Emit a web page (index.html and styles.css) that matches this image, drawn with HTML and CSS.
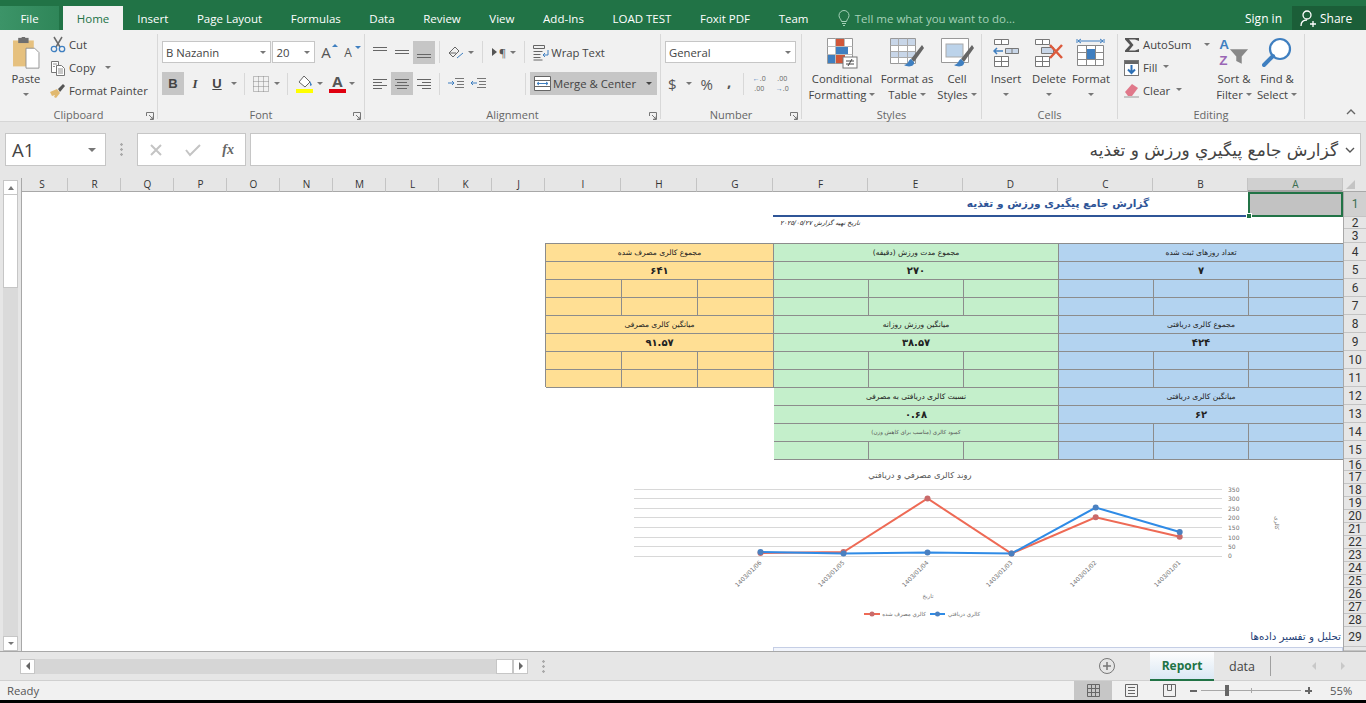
FILE: index.html
```html
<!DOCTYPE html>
<html lang="en">
<head>
    <meta charset="UTF-8">
    <title>Report - Excel</title>
    <link rel="stylesheet" href="styles.css">
</head>
<body>
    <div class="title-bar">
        <div class="tab file">File</div>
        <div class="tab home">Home</div>
        <div class="tab">Insert</div>
        <div class="tab">Page Layout</div>
        <div class="tab">Formulas</div>
        <div class="tab">Data</div>
        <div class="tab">Review</div>
        <div class="tab">View</div>
        <div class="tab">Add-Ins</div>
        <div class="tab">LOAD TEST</div>
        <div class="tab">Foxit PDF</div>
        <div class="tab">Team</div>
        <div class="tell-me">
            <svg width="12" height="17" viewBox="0 0 12 17" fill="none" stroke="#a5d1b8"><path d="M3.5 11.5C3 9 1 8 1 5.5a5 5 0 0 1 10 0C11 8 9 9 8.5 11.5zM4 13.5h4M5 15.5h2"/></svg>
            <span>Tell me what you want to do...</span>
        </div>
        <div class="sign-in">Sign in</div>
        <div class="share">
            <svg width="17" height="17" viewBox="0 0 17 17" fill="none" stroke="#fff" stroke-width="1.3"><circle cx="7" cy="5" r="4"/><path d="M1 16c0-4 2-6 6-6M10 14h6M13 11v6"/></svg>
            <span>Share</span>
        </div>
    </div>

    <div class="ribbon">
        <!-- Clipboard -->
        <div class="group clipboard">
            <div class="group-body">
                <div class="big-tool paste">
                    <svg width="32" height="37" viewBox="0 0 32 37"><rect x="1" y="4" width="24" height="30" fill="#e6c17f"/><rect x="7" y="1" width="12" height="6" fill="#6f6f6f"/><rect x="11" y="0" width="4" height="3" fill="#6f6f6f"/><path d="M16 13h10l5 5v18H16z" fill="#fff" stroke="#8a8a8a"/></svg>
                    <span>Paste</span>
                    <i class="caret"></i>
                </div>
                <div class="small-col">
                    <div class="small-tool">
                        <svg width="16" height="17" viewBox="0 0 16 17" fill="none"><path d="M4 1l6 10M12 1L6 11" stroke="#6a6a6a" stroke-width="1.5"/><circle cx="4" cy="13" r="2.7" stroke="#3f7fc0" stroke-width="1.3"/><circle cx="12" cy="13" r="2.7" stroke="#3f7fc0" stroke-width="1.3"/></svg>
                        <span>Cut</span>
                    </div>
                    <div class="small-tool">
                        <svg width="16" height="16" viewBox="0 0 16 16" fill="#fff" stroke="#777"><path d="M1.5 1.5h7v11h-7z"/><path d="M6.5 5.5h5l3 3v7h-8z"/><path d="M3 4h4M3 6.500h2M8 9h5M8 11h5M8 13h5" stroke-width=".8"/></svg>
                        <span>Copy</span>
                        <i class="caret gap"></i>
                    </div>
                    <div class="small-tool">
                        <svg width="16" height="15" viewBox="0 0 16 15"><path d="M0 9l7-3 3 4-4 5-2-1 1-2-3 1z" fill="#e1b96f"/><path d="M8 6l5-5 2 2-5 6z" fill="#555"/></svg>
                        <span>Format Painter</span>
                    </div>
                </div>
            </div>
            <div class="group-label">Clipboard</div>
            <svg class="launcher" width="8" height="8" viewBox="0 0 8 8" fill="none" stroke="#777"><path d="M.5 4V.5H7.500V7.500H4M3 3l4 4M4.500 7H7V4.500"/></svg>
        </div>

        <!-- Font -->
        <div class="group font">
            <div class="group-body rows">
                <div class="tool-row first">
                    <div class="combo font-name"><span>B Nazanin</span><i class="caret"></i></div>
                    <div class="combo font-size"><span>20</span><i class="caret"></i></div>
                    <div class="size-btn grow">A<i class="up"></i></div>
                    <div class="size-btn shrink">A<i class="down"></i></div>
                </div>
                <div class="tool-row second">
                    <div class="btn active bold">B</div>
                    <div class="btn italic">I</div>
                    <div class="btn underline">U</div>
                    <i class="caret narrow"></i>
                    <div class="sep"></div>
                    <svg class="borders" width="16" height="16" viewBox="0 0 16 16" fill="none" stroke="#8a8a8a" stroke-dasharray="1 1"><path d="M.5.5h15v15H.5zM.5 5.500h15M.5 10.500h15M5.500.5v15M10.500.5v15"/></svg>
                    <i class="caret narrow"></i>
                    <div class="sep"></div>
                    <svg class="fill-color" width="18" height="20" viewBox="0 0 18 20"><path d="M3 8l5-6 6 6-5 5z" fill="#fff" stroke="#666"/><path d="M14 7l2 4-2 1z" fill="#3f7fc0"/><rect x="0" y="15" width="17" height="4" fill="#ffff00"/></svg>
                    <i class="caret narrow"></i>
                    <div class="font-color">A<b></b></div>
                    <i class="caret narrow"></i>
                </div>
            </div>
            <div class="group-label">Font</div>
            <svg class="launcher" width="8" height="8" viewBox="0 0 8 8" fill="none" stroke="#777"><path d="M.5 4V.5H7.500V7.500H4M3 3l4 4M4.500 7H7V4.500"/></svg>
        </div>

        <!-- Alignment -->
        <div class="group alignment">
            <div class="group-body rows">
                <div class="tool-row first">
                    <div class="align-btn"><svg width="14" height="10" viewBox="0 0 14 10" stroke="#666"><path d="M0 .5h14M0 3.500h14"/></svg></div>
                    <div class="align-btn"><svg width="14" height="10" viewBox="0 0 14 10" stroke="#666"><path d="M0 3.500h14M0 6.500h14"/></svg></div>
                    <div class="align-btn active"><svg width="14" height="14" viewBox="0 0 14 14" stroke="#666"><path d="M0 9.500h14M0 12.500h14"/></svg></div>
                    <div class="sep"></div>
                    <svg width="16" height="15" viewBox="0 0 16 15" fill="none" stroke="#666"><path d="M1 8l6-6 4 4-6 6zM1 8l7 0"/><path d="M9 13l6-5" stroke="#3f7fc0"/></svg>
                    <i class="caret narrow"></i>
                    <div class="sep"></div>
                    <span class="para"><svg width="8" height="10" viewBox="0 0 8 10"><path d="M1 1l5 4-5 4z" fill="#555"/></svg>¶</span>
                    <i class="caret narrow"></i>
                    <div class="sep"></div>
                    <div class="wrap-text">
                        <svg width="17" height="17" viewBox="0 0 17 17" fill="none" stroke="#666"><path d="M.5 1.500h11v3H.5zM.5 7.500h9M.5 10.500h7M.5 13.500h7M.5 16h9"/><path d="M15 6v5h-5M12 9l-2 2 2 2" stroke="#3f7fc0"/></svg>
                        <span>Wrap Text</span>
                    </div>
                </div>
                <div class="tool-row second">
                    <div class="align-btn"><svg width="14" height="12" viewBox="0 0 14 12" stroke="#666"><path d="M0 1.500h14M0 4.500h9M0 7.500h14M0 10.500h9"/></svg></div>
                    <div class="align-btn active"><svg width="14" height="12" viewBox="0 0 14 12" stroke="#666"><path d="M0 1.500h14M2 4.500h10M0 7.500h14M2 10.500h10"/></svg></div>
                    <div class="align-btn"><svg width="14" height="12" viewBox="0 0 14 12" stroke="#666"><path d="M0 1.500h14M5 4.500h9M0 7.500h14M5 10.500h9"/></svg></div>
                    <div class="sep"></div>
                    <svg class="indent" width="16" height="12" viewBox="0 0 16 12" fill="none" stroke="#777"><path d="M7 .5h9M9 3.500h7M9 6.500h7M7 9.500h9"/><path d="M0 5h6M4 3l2 2-2 2" stroke="#3f7fc0"/></svg>
                    <svg class="indent" width="16" height="12" viewBox="0 0 16 12" fill="none" stroke="#777"><path d="M7 .5h9M9 3.500h7M9 6.500h7M7 9.500h9"/><path d="M1 5h6M3 3L1 5l2 2" stroke="#3f7fc0"/></svg>
                    <div class="sep"></div>
                    <div class="merge">
                        <svg width="17" height="15" viewBox="0 0 17 15" fill="#fff" stroke="#666"><path d="M.5.5h16v14H.5zM.5 4.500h16M.5 10.500h16"/><path d="M3 7.500h11M5 6L3 7.500 5 9M12 6l2 1.500L12 9" fill="none" stroke="#3f7fc0"/></svg>
                        <span>Merge &amp; Center</span>
                        <i class="caret dark"></i>
                    </div>
                </div>
            </div>
            <div class="group-label">Alignment</div>
            <svg class="launcher" width="8" height="8" viewBox="0 0 8 8" fill="none" stroke="#777"><path d="M.5 4V.5H7.500V7.500H4M3 3l4 4M4.500 7H7V4.500"/></svg>
        </div>

        <!-- Number -->
        <div class="group number">
            <div class="group-body rows">
                <div class="tool-row first">
                    <div class="combo number-format"><span>General</span><i class="caret"></i></div>
                </div>
                <div class="tool-row second">
                    <span class="num-sym dollar">$</span>
                    <i class="caret narrow"></i>
                    <span class="num-sym percent">%</span>
                    <span class="num-sym comma">,</span>
                    <div class="sep"></div>
                    <div class="decimals"><span><em>←</em>.0</span><span>.00</span></div>
                    <div class="decimals"><span>.00</span><span><em>→</em>.0</span></div>
                </div>
            </div>
            <div class="group-label">Number</div>
            <svg class="launcher" width="8" height="8" viewBox="0 0 8 8" fill="none" stroke="#777"><path d="M.5 4V.5H7.500V7.500H4M3 3l4 4M4.500 7H7V4.500"/></svg>
        </div>

        <!-- Styles -->
        <div class="group styles">
            <div class="group-body">
                <div class="big-tool cond-format">
                    <svg width="32" height="32" viewBox="0 0 32 32"><path d="M1.500 1.500h25v25h-25z" fill="#fff" stroke="#999"/><path d="M1.500 9.500h25M1.500 17.500h25M9.500 1.500v25M18.500 1.500v25" stroke="#bbb"/><rect x="10" y="2" width="8" height="7" fill="#d0573a"/><rect x="10" y="10" width="12" height="7" fill="#3f7fc0"/><rect x="10" y="18" width="9" height="8" fill="#d0573a"/><rect x="2" y="18" width="7" height="8" fill="#3f7fc0"/><rect x="17" y="20" width="14" height="11" fill="#fff" stroke="#777"/><path d="M20 24h8M20 27h8M26 22l-4 7" stroke="#444" fill="none"/></svg>
                    <span>Conditional</span>
                    <span>Formatting<i class="caret inline"></i></span>
                </div>
                <div class="big-tool format-table">
                    <svg width="36" height="32" viewBox="0 0 36 32"><path d="M1.500 1.500h25v25h-25z" fill="#fff" stroke="#999"/><rect x="2" y="2" width="24" height="6" fill="#c8d6e8"/><rect x="2" y="14" width="24" height="6" fill="#c8d6e8"/><path d="M1.500 8.500h25M1.500 14.500h25M1.500 20.500h25M9.500 1.500v25M18.500 1.500v25" stroke="#aaa"/><path d="M33 8L22 22l3 3L35 11z" fill="#666"/><path d="M22 22c-3 1-2 5-7 6 5 3 11 1 10-3z" fill="#3f7fc0"/></svg>
                    <span>Format as</span>
                    <span>Table<i class="caret inline"></i></span>
                </div>
                <div class="big-tool cell-styles">
                    <svg width="34" height="32" viewBox="0 0 34 32"><path d="M1.500 1.500h27v24h-27z" fill="#fff" stroke="#999"/><rect x="6" y="7" width="17" height="13" fill="#bcd3ea" stroke="#aaa"/><path d="M32 8L21 22l3 3L34 11z" fill="#666"/><path d="M21 22c-3 1-2 5-7 6 5 3 11 1 10-3z" fill="#3f7fc0"/></svg>
                    <span>Cell</span>
                    <span>Styles<i class="caret inline"></i></span>
                </div>
            </div>
            <div class="group-label">Styles</div>
        </div>

        <!-- Cells -->
        <div class="group cells">
            <div class="group-body">
                <div class="big-tool insert">
                    <svg width="27" height="30" viewBox="0 0 27 30" fill="#fff" stroke="#777"><path d="M1.500 1.500h14v5h-14zM8.500 1.500v5M1.500 18.500h14v10h-14zM1.500 23.500h14M8.500 18.500v10"/><path d="M12.500 10.500h13v5h-13zM19 10.500v5" fill="#c8d6e8"/><path d="M1 13h9M4 10l-3 3 3 3" fill="none" stroke="#3f7fc0" stroke-width="1.500"/></svg>
                    <span>Insert</span>
                    <i class="caret"></i>
                </div>
                <div class="big-tool delete">
                    <svg width="30" height="30" viewBox="0 0 30 30" fill="#fff" stroke="#777"><path d="M1.500 1.500h14v5h-14zM8.500 1.500v5M1.500 18.500h14v10h-14zM1.500 23.500h14M8.500 18.500v10"/><path d="M7.500 9.500h12v6h-12z" fill="#c8d6e8"/><path d="M16 7l12 13M28 7L16 20" stroke="#dc5a3c" stroke-width="2.500"/></svg>
                    <span>Delete</span>
                    <i class="caret"></i>
                </div>
                <div class="big-tool format-cells">
                    <svg width="30" height="32" viewBox="0 0 30 32" fill="#fff" stroke="#888"><path d="M1 2v4M28 2v4M2 4h25M2 4l3-2M2 4l3 2M27 4l-3-2M27 4l-3 2" stroke="#3f7fc0" fill="none"/><path d="M1.500 8.500h26v20h-26zM1.500 15.500h26M1.500 22.500h26M10.500 8.500v20M19.500 8.500v20"/><rect x="11" y="12" width="8" height="10" fill="#3f7fc0" stroke="none"/></svg>
                    <span>Format</span>
                    <i class="caret"></i>
                </div>
            </div>
            <div class="group-label">Cells</div>
        </div>

        <!-- Editing -->
        <div class="group editing">
            <div class="group-body">
                <div class="small-col">
                    <div class="small-tool">
                        <svg width="16" height="16" viewBox="0 0 16 16"><path d="M1 1h14v3L11 2.500H5L9.500 8 5 13.500h6L15 12v3H1v-1.500L6 8 1 2.500z" fill="#555"/></svg>
                        <span>AutoSum</span>
                        <i class="caret wide-gap"></i>
                    </div>
                    <div class="small-tool">
                        <svg width="16" height="16" viewBox="0 0 16 16"><rect x=".5" y=".5" width="14" height="15" fill="#fff" stroke="#777"/><rect x="1" y="1" width="13" height="3" fill="#666"/><path d="M7.500 5v8M4 9.500l3.500 3.500L11 9.500" fill="none" stroke="#2c6fb5" stroke-width="2"/></svg>
                        <span>Fill</span>
                        <i class="caret inline"></i>
                    </div>
                    <div class="small-tool">
                        <svg width="16" height="15" viewBox="0 0 16 15"><path d="M1 9l7-8 6 4-6 8H4z" fill="#e0788a"/><path d="M0 14h15" stroke="#999"/></svg>
                        <span>Clear</span>
                        <i class="caret inline"></i>
                    </div>
                </div>
                <div class="big-tool sort">
                    <div class="sort-icon">
                        <div class="az"><b class="a">A</b><b class="z">Z</b></div>
                        <svg width="20" height="17" viewBox="0 0 22 18"><path d="M1 1h20l-7 8v8l-6-3V9z" fill="#888"/></svg>
                    </div>
                    <span>Sort &amp;</span>
                    <span>Filter<i class="caret inline"></i></span>
                </div>
                <div class="big-tool find">
                    <svg width="30" height="32" viewBox="0 0 30 32" fill="none"><circle cx="18" cy="12" r="10" fill="#fff" stroke="#3f7fc0" stroke-width="2.200"/><path d="M11 19L2 28" stroke="#3f7fc0" stroke-width="4" stroke-linecap="round"/></svg>
                    <span>Find &amp;</span>
                    <span>Select<i class="caret inline"></i></span>
                </div>
            </div>
            <div class="group-label">Editing</div>
        </div>
        <svg class="collapse" width="10" height="6" viewBox="0 0 10 6" fill="none" stroke="#666" stroke-width="1.400"><path d="M1 5l4-4 4 4"/></svg>
    </div>

    <div class="formula-bar">
        <div class="name-box"><span>A1</span><i class="caret big"></i></div>
        <div class="grip"></div>
        <div class="fx-box">
            <svg width="14" height="14" viewBox="0 0 14 14" stroke="#c4c4c4" stroke-width="2"><path d="M2 2l10 10M12 2L2 12"/></svg>
            <svg width="16" height="14" viewBox="0 0 16 14" fill="none" stroke="#c4c4c4" stroke-width="2"><path d="M1 7l4 5L15 2"/></svg>
            <span class="fx">fx</span>
        </div>
        <div class="formula-input">
            <span dir="rtl">گزارش جامع پیگیري ورزش و تغذیه</span>
            <svg width="10" height="6" viewBox="0 0 10 6" fill="none" stroke="#555" stroke-width="1.400"><path d="M1 1l4 4 4-4"/></svg>
        </div>
    </div>

    <div class="workbook">
        <div class="v-scroll">
            <div class="scroll-btn"><i class="caret flip"></i></div>
            <div class="v-thumb"></div>
            <div class="v-track"></div>
            <div class="scroll-btn"><i class="caret"></i></div>
        </div>

        <div class="sheet">
            <div class="col-head first-col">S</div><div class="col-head">R</div><div class="col-head">Q</div>
            <div class="col-head">P</div><div class="col-head">O</div><div class="col-head">N</div>
            <div class="col-head">M</div><div class="col-head">L</div><div class="col-head">K</div>
            <div class="col-head">J</div><div class="col-head">I</div><div class="col-head">H</div>
            <div class="col-head">G</div><div class="col-head">F</div><div class="col-head">E</div>
            <div class="col-head">D</div><div class="col-head">C</div><div class="col-head">B</div>
            <div class="col-head current">A</div>
            <div class="corner"><i></i></div>

            <div class="report-title" dir="rtl">گزارش جامع پیگیری ورزش و تغذیه</div>
            <div class="selected-cell"><i></i></div>
            <div class="report-date" dir="rtl">تاریخ تهیه گزارش ۲۰۲۵/۰۵/۲۷</div>

            <div class="block yellow" dir="rtl">
                <div class="cell wide label">مجموع کالری مصرف شده</div>
                <div class="cell wide value">۶۴۱</div>
                <div class="cell"></div><div class="cell"></div><div class="cell"></div>
                <div class="cell"></div><div class="cell"></div><div class="cell"></div>
                <div class="cell wide label">میانگین کالری مصرفی</div>
                <div class="cell wide value">۹۱.۵۷</div>
                <div class="cell"></div><div class="cell"></div><div class="cell"></div>
                <div class="cell"></div><div class="cell"></div><div class="cell"></div>
            </div>

            <div class="block green" dir="rtl">
                <div class="cell wide label">مجموع مدت ورزش (دقیقه)</div>
                <div class="cell wide value">۲۷۰</div>
                <div class="cell"></div><div class="cell"></div><div class="cell"></div>
                <div class="cell"></div><div class="cell"></div><div class="cell"></div>
                <div class="cell wide label">میانگین ورزش روزانه</div>
                <div class="cell wide value">۳۸.۵۷</div>
                <div class="cell"></div><div class="cell"></div><div class="cell"></div>
                <div class="cell"></div><div class="cell"></div><div class="cell"></div>
                <div class="cell wide label">نسبت کالری دریافتی به مصرفی</div>
                <div class="cell wide value">۰.۶۸</div>
                <div class="cell wide note">کمبود کالری (مناسب برای کاهش وزن)</div>
                <div class="cell"></div><div class="cell"></div><div class="cell"></div>
            </div>

            <div class="block blue" dir="rtl">
                <div class="cell wide label">تعداد روزهای ثبت شده</div>
                <div class="cell wide value">۷</div>
                <div class="cell"></div><div class="cell"></div><div class="cell"></div>
                <div class="cell"></div><div class="cell"></div><div class="cell"></div>
                <div class="cell wide label">مجموع کالری دریافتی</div>
                <div class="cell wide value">۴۲۴</div>
                <div class="cell"></div><div class="cell"></div><div class="cell"></div>
                <div class="cell"></div><div class="cell"></div><div class="cell"></div>
                <div class="cell wide label">میانگین کالری دریافتی</div>
                <div class="cell wide value">۶۲</div>
                <div class="cell"></div><div class="cell"></div><div class="cell"></div>
                <div class="cell"></div><div class="cell"></div><div class="cell"></div>
            </div>

            <div class="analysis-title" dir="rtl">تحلیل و تفسیر داده‌ها</div>
            <div class="analysis-box"></div>

            <div class="row-heads">
                <div class="current">1</div><div>2</div><div>3</div><div>4</div><div>5</div><div>6</div>
                <div>7</div><div>8</div><div>9</div><div>10</div><div>11</div><div>12</div>
                <div>13</div><div>14</div><div>15</div><div>16</div><div>17</div><div>18</div>
                <div>19</div><div>20</div><div>21</div><div>22</div><div>23</div><div>24</div>
                <div>25</div><div>26</div><div>27</div><div>28</div><div>29</div><div></div>
            </div>

            <svg class="chart" width="660" height="165" viewBox="634 465 660 165">
                <g class="chart-grid">
                    <path d="M634 489.500H1222M634 498.500H1222M634 508.500H1222M634 517.500H1222M634 527.500H1222M634 537.500H1222M634 546.500H1222M634 556.500H1222"/>
                </g>
                <g class="y-labels">
                    <text x="1228" y="492">350</text>
                    <text x="1228" y="501">300</text>
                    <text x="1228" y="511">250</text>
                    <text x="1228" y="520">200</text>
                    <text x="1228" y="530">150</text>
                    <text x="1228" y="540">100</text>
                    <text x="1228" y="549">50</text>
                    <text x="1228" y="558">0</text>
                </g>
                <polyline class="line-red" points="760.500,553 843.500,552 927.500,498.500 1011.500,553.500 1095.700,517.300 1179.700,536.700"/>
                <polyline class="line-blue" points="760.500,552 843.500,553.500 927.500,552.500 1011.500,553.500 1095.700,507.500 1179.700,532"/>
                <g class="dots-red">
                    <circle cx="760.500" cy="553" r="3"/><circle cx="843.500" cy="552" r="3"/><circle cx="927.500" cy="498.500" r="3"/>
                    <circle cx="1011.500" cy="553.500" r="3"/><circle cx="1095.700" cy="517.300" r="3"/><circle cx="1179.700" cy="536.700" r="3"/>
                </g>
                <g class="dots-blue">
                    <circle cx="760.500" cy="552" r="3"/><circle cx="843.500" cy="553.500" r="3"/><circle cx="927.500" cy="552.500" r="3"/>
                    <circle cx="1011.500" cy="553.500" r="3"/><circle cx="1095.700" cy="507.500" r="3"/><circle cx="1179.700" cy="532" r="3"/>
                </g>
                <g class="x-labels">
                    <text transform="translate(762 563) rotate(-45)">1403/01/06</text>
                    <text transform="translate(845 563) rotate(-45)">1403/01/05</text>
                    <text transform="translate(929 563) rotate(-45)">1403/01/04</text>
                    <text transform="translate(1013 563) rotate(-45)">1403/01/03</text>
                    <text transform="translate(1097 563) rotate(-45)">1403/01/02</text>
                    <text transform="translate(1181 563) rotate(-45)">1403/01/01</text>
                </g>
                <text class="chart-title" x="920" y="478" direction="rtl">روند کالری مصرفي و دریافتي</text>
                <text class="axis-title" x="928" y="598" direction="rtl">تاریخ</text>
                <text class="axis-title" transform="translate(1275 523) rotate(90)" direction="rtl">کالری</text>
                <path class="line-blue" d="M930 614H945"/><circle class="legend-blue" cx="937.500" cy="614" r="2.500"/>
                <text class="legend-text" x="964" y="616" direction="rtl">کالري دریافتي</text>
                <path class="line-red" d="M864 614H880"/><circle class="legend-red" cx="872" cy="614" r="2.500"/>
                <text class="legend-text" x="904" y="616" direction="rtl">کالري مصرف شده</text>
            </svg>
        </div>
    </div>

    <div class="sheet-tabs">
        <div class="h-scroll">
            <div class="h-btn"><i class="tri-left"></i></div>
            <div class="h-track"></div>
            <div class="h-thumb"></div>
            <div class="h-btn"><i class="tri-right"></i></div>
        </div>
        <div class="grip tabs-grip"></div>
        <svg class="add-sheet" width="16" height="16" viewBox="0 0 16 16" fill="none" stroke="#777"><circle cx="8" cy="8" r="7.500"/><path d="M8 4v8M4 8h8" stroke-width="1.500"/></svg>
        <div class="sheet-tab active">Report</div>
        <div class="sheet-tab">data</div>
        <div class="tab-sep"></div>
        <i class="tri-left pale"></i>
        <i class="tri-right pale"></i>
    </div>

    <div class="status-bar">
        <span class="ready">Ready</span>
        <div class="view-btn active"><svg width="13" height="13" viewBox="0 0 13 13" fill="none" stroke="#666"><path d="M.5.5h12v12H.5zM.5 4.500h12M.5 8.500h12M4.500.5v12M8.500.5v12"/></svg></div>
        <div class="view-btn"><svg width="13" height="13" viewBox="0 0 13 13" fill="none" stroke="#666"><path d="M.5.5h12v12H.5zM3 3.500h7M3 6.500h7M3 9.500h7"/></svg></div>
        <div class="view-btn"><svg width="13" height="13" viewBox="0 0 13 13" fill="none" stroke="#666"><path d="M.5.5h12v12H.5zM4.500.5v6h4v-6"/></svg></div>
        <div class="zoom-minus"></div>
        <div class="zoom-track"><i class="zoom-mid"></i><i class="zoom-thumb"></i></div>
        <div class="zoom-plus"></div>
        <span class="zoom-value">55%</span>
    </div>
    <div class="taskbar-edge"></div>
</body>
</html>
```

FILE: styles.css
```css
:root {
    --ui-font: "Open Sans", "Noto Sans", sans-serif;
    --rows: 25px 12px 14px repeat(12, 18px) 12px 13px repeat(11, 13px) 20px 1fr;
}

* {
    box-sizing: border-box;
}

body {
    margin: 0;
    height: 703px;
    overflow: hidden;
    background-color: #f1f1f1;
    font-family: var(--ui-font);
    font-size: 11.3px;
    color: #444;
}

i {
    display: block;
}

svg {
    display: block;
    flex: none;
}

/* title bar and tabs */
.title-bar {
    height: 30px;
    padding-top: 6px;
    background-color: #217346;
    color: #fff;
    display: flex;
    align-items: stretch;
    font-size: 11.5px;
}

.tab {
    padding: 0 14.3px;
    display: flex;
    align-items: center;
    white-space: nowrap;
}

.tab.file {
    width: 59px;
    margin-right: 4px;
    justify-content: center;
    background: linear-gradient(to right, #3c9468, #2f8659);
}

.tab.home {
    width: 60px;
    padding: 0;
    justify-content: center;
    background-color: #f1f1f1;
    color: #217346;
}

.tell-me {
    margin-left: 15px;
    display: flex;
    align-items: center;
    gap: 5px;
    color: #a5d1b8;
}

.sign-in {
    margin-left: auto;
    display: flex;
    align-items: center;
    padding-right: 10px;
    font-size: 12px;
}

.share {
    width: 74px;
    padding-left: 8px;
    background-color: #1b5e38;
    display: flex;
    align-items: center;
    gap: 3px;
    font-size: 12px;
}

/* ribbon */
.ribbon {
    height: 92px;
    padding-top: 4px;
    background-color: #f1f1f1;
    border-bottom: 1px solid #d6d6d6;
    display: flex;
    position: relative;
}

.group {
    height: 85px;
    position: relative;
    border-right: 1px solid #d8d8d8;
    display: flex;
    flex-direction: column;
    flex: none;
}

.group-body {
    height: 73px;
    display: flex;
    flex: none;
}

.group-body.rows {
    flex-direction: column;
}

.group-label {
    text-align: center;
    line-height: 15px;
    color: #666;
    font-size: 11px;
    flex: none;
}

.launcher {
    position: absolute;
    right: 3px;
    bottom: -1px;
}

.clipboard { width: 158px; }
.font { width: 207px; }
.alignment { width: 296px; }
.number { width: 141px; }
.styles { width: 180px; }
.cells { width: 136px; }
.editing { width: 187px; }

.collapse {
    position: absolute;
    right: 10px;
    bottom: 6px;
}

.caret {
    width: 0;
    height: 0;
    border-left: 3px solid transparent;
    border-right: 3px solid transparent;
    border-top: 3px solid #777;
    flex: none;
}

.caret.flip {
    border-top: 0;
    border-bottom: 4px solid #777;
}

.caret.inline {
    display: inline-block;
    margin: 0 0 2px 3px;
    vertical-align: middle;
}

.caret.narrow {
    margin: 0 3px;
}

.caret.gap { margin-left: 7px; }
.caret.wide-gap { margin-left: 10px; }
.caret.dark { border-top-color: #444; margin-left: 8px; }
.caret.big { border-width: 4px 4px 0; border-top-color: #777; }

.big-tool {
    display: flex;
    flex-direction: column;
    align-items: center;
    line-height: 16px;
    white-space: nowrap;
    flex: none;
}

.big-tool > svg,
.sort-icon {
    height: 32px;
    margin-top: 3px;
    margin-bottom: 2px;
}

.big-tool .caret {
    margin-top: 6px;
}

.big-tool .caret.inline {
    margin-top: 0;
}

.paste {
    width: 32px;
    margin-left: 10px;
}

.small-col {
    margin-left: 8px;
    margin-top: -1px;
    flex: none;
}

.small-tool {
    height: 23px;
    display: flex;
    align-items: center;
    gap: 3px;
    white-space: nowrap;
}

.tool-row {
    display: flex;
    align-items: center;
    flex: none;
}

.tool-row.first {
    height: 22px;
    margin-top: 7px;
    padding-left: 4px;
}

.tool-row.second {
    height: 23px;
    margin-top: 9px;
    padding-left: 4px;
}

.combo {
    height: 22px;
    padding: 0 4px 0 3px;
    background-color: #fff;
    border: 1px solid #c6c6c6;
    display: flex;
    align-items: center;
    justify-content: space-between;
}

.font-name { width: 110px; }
.font-size { width: 43px; margin-left: 1px; margin-right: 6px; }
.number-format { width: 131px; }

.size-btn {
    width: 20px;
    font-size: 15px;
    position: relative;
    color: #555;
}

.size-btn.shrink {
    margin-left: 3px;
    font-size: 12px;
}

.size-btn i {
    position: absolute;
    top: 2px;
    left: 11px;
    border-left: 3px solid transparent;
    border-right: 3px solid transparent;
}

.size-btn .up { border-bottom: 3px solid #3f7fc0; }
.size-btn .down { border-top: 3px solid #3f7fc0; }

.btn {
    width: 22px;
    height: 23px;
    display: flex;
    align-items: center;
    justify-content: center;
    font-size: 13px;
    font-family: "Liberation Sans", sans-serif;
    color: #444;
}

.active {
    background-color: #c6c6c6;
}

.bold { font-weight: bold; }
.italic { font-style: italic; font-family: "Liberation Serif", serif; font-weight: bold; }
.underline { text-decoration: underline; font-weight: bold; }

.sep {
    width: 1px;
    height: 22px;
    background-color: #d8d8d8;
    flex: none;
}

.font .sep { margin: 0 8px 0 4px; }
.borders { margin-right: 2px; }

.font-color {
    width: 17px;
    margin-left: 3px;
    text-align: center;
    font-size: 15px;
    font-weight: bold;
    line-height: 15px;
    color: #555;
}

.font-color b {
    display: block;
    height: 4px;
    background-color: #e00010;
}

.align-btn {
    width: 22px;
    height: 23px;
    display: flex;
    align-items: center;
    justify-content: center;
    flex: none;
}

.alignment .tool-row {
    padding-left: 4px;
}

.alignment .caret.narrow { margin: 0 4px; }
.alignment .sep { margin: 0 8px 0 4px; }

.para {
    display: flex;
    align-items: center;
    font-size: 11px;
    color: #555;
}

.wrap-text {
    display: flex;
    align-items: center;
    gap: 1px;
}

.indent { margin-right: 6px; }
.alignment .indent + .sep { margin-left: 33px; }

.merge {
    width: 127px;
    height: 23px;
    margin-left: -4px;
    padding-left: 4px;
    background-color: #c6c6c6;
    display: flex;
    align-items: center;
    gap: 2px;
    white-space: nowrap;
}

.number .tool-row {
    padding-left: 4px;
}

.number .caret.narrow { margin: 0 9px; }

.num-sym {
    color: #555;
    font-size: 15px;
}

.dollar { margin-left: 3px; }
.comma { margin-left: 14px; font-weight: bold; margin-top: -6px; }
.number .sep { margin: 0 7px 0 12px; }

.decimals {
    width: 16px;
    margin-right: 7px;
    font-size: 7px;
    line-height: 10px;
    text-align: center;
    color: #666;
}

.decimals span {
    display: block;
    white-space: nowrap;
}

.decimals em {
    font-style: normal;
    color: #3f7fc0;
}

.cond-format { width: 62px; margin-left: 9px; }
.format-table { width: 60px; margin-left: 4px; }
.cell-styles { width: 40px; }

.insert { width: 32px; margin-left: 8px; }
.delete { width: 38px; margin-left: 8px; }
.format-cells { width: 38px; margin-left: 4px; }

.editing .small-col { width: 92px; margin-left: 6px; }
.sort { width: 36px; }
.find { width: 40px; margin-left: 5px; }

.sort-icon {
    display: flex;
    align-items: center;
    gap: 0;
}

.sort-icon svg {
    margin: 6px 0 0;
}

.az {
    display: flex;
    flex-direction: column;
    font-size: 13.5px;
    line-height: 16px;
    font-family: "Liberation Sans", sans-serif;
}

.az .a { color: #3f7fc0; }
.az .z { color: #9a66b5; }

/* formula bar */
.formula-bar {
    height: 56px;
    padding: 11px 5px 0;
    background-color: #e6e6e6;
    display: flex;
    align-items: flex-start;
}

.name-box {
    width: 101px;
    height: 33px;
    padding: 0 9px 0 6px;
    background-color: #fff;
    border: 1px solid #c6c6c6;
    display: flex;
    align-items: center;
    justify-content: space-between;
    font-size: 18.5px;
    color: #444;
}

.grip {
    width: 31px;
    height: 14px;
    margin-top: 9px;
    background: radial-gradient(circle, #aaa 1px, transparent 1.5px) center top / 3px 5px repeat-y;
    flex: none;
}

.fx-box {
    width: 109px;
    height: 33px;
    padding: 0 11px;
    background-color: #fff;
    border: 1px solid #c6c6c6;
    display: flex;
    align-items: center;
    justify-content: space-between;
}

.fx {
    font-family: "Liberation Serif", serif;
    font-style: italic;
    font-weight: bold;
    font-size: 14px;
    color: #666;
}

.formula-input {
    width: 1111px;
    height: 33px;
    margin-left: 4px;
    padding-right: 5px;
    background-color: #fff;
    border: 1px solid #c6c6c6;
    display: flex;
    align-items: center;
    justify-content: flex-end;
    gap: 7px;
    font-family: "DejaVu Sans", sans-serif;
    font-size: 17px;
    color: #444;
}

/* sheet */
.workbook {
    height: 474px;
    display: flex;
    background-color: #e6e6e6;
}

.v-scroll {
    width: 22px;
    padding: 2px 0 0 3px;
    border-right: 1px solid #a8a8a8;
    border-bottom: 1px solid #a8a8a8;
    display: flex;
    flex-direction: column;
    flex: none;
}

.scroll-btn {
    width: 15px;
    height: 15px;
    background-color: #fff;
    border: 1px solid #c6c6c6;
    display: flex;
    align-items: center;
    justify-content: center;
    flex: none;
}

.v-thumb {
    width: 15px;
    height: 93px;
    background-color: #fff;
    border: 1px solid #c6c6c6;
    border-top: 0;
    flex: none;
}

.v-track {
    width: 15px;
    flex: 1;
    background-color: #dadada;
}

.sheet {
    width: 1344px;
    position: relative;
    display: grid;
    grid-template-columns: 46px repeat(9, 53px) repeat(3, 76px) repeat(6, 95px) 23px;
    grid-template-rows: 14px var(--rows);
    background-color: #fff;
    border-bottom: 1px solid #a8a8a8;
    overflow: hidden;
}

.col-head {
    padding-left: 1px;
    background-color: #e6e6e6;
    border-right: 1px solid #c4c4c4;
    border-bottom: 1px solid #a8a8a8;
    font-size: 10px;
    line-height: 13px;
    text-align: center;
    color: #333;
}

.col-head.first-col {
    padding: 0 5px 0 0;
}

.col-head.current {
    background-color: #d0d0d0;
    border-bottom: 2px solid #a0a0a0;
    color: #3c6e50;
}

.corner {
    background-color: #e6e6e6;
    border-bottom: 1px solid #a8a8a8;
    position: relative;
}

.corner i {
    position: absolute;
    left: 3px;
    bottom: 2px;
    border-left: 9px solid transparent;
    border-bottom: 9px solid #c4c4c4;
}

.report-title {
    grid-column: 14 / 19;
    grid-row: 2;
    padding-left: 95px;
    border-bottom: 2px solid #2f5597;
    text-align: center;
    font-family: "DejaVu Sans", sans-serif;
    font-size: 10.6px;
    font-weight: bold;
    line-height: 22px;
    color: #2f5597;
}

.selected-cell {
    grid-column: 19;
    grid-row: 2;
    background-color: #c2c2c2;
    border: 2px solid #217346;
    position: relative;
}

.selected-cell i {
    position: absolute;
    left: -4px;
    bottom: -4px;
    width: 6px;
    height: 6px;
    background-color: #217346;
    border: 1px solid #fff;
}

.report-date {
    grid-column: 14;
    grid-row: 3;
    padding-right: 8px;
    white-space: nowrap;
    font-family: "DejaVu Sans", sans-serif;
    font-size: 6.4px;
    font-style: italic;
    line-height: 12px;
    color: #222;
    margin-left: -10px;
}

.block {
    display: grid;
    grid-template-columns: repeat(3, 1fr);
    grid-auto-rows: 18px;
    border-top: 1px solid #8c8c8c;
    margin: 0 -1px 0 1px;
    font-family: "DejaVu Sans", sans-serif;
    color: #222;
}

.block.yellow {
    grid-column: 11 / 14;
    grid-row: 5 / 13;
    border-left: 1px solid #8c8c8c;
    margin-left: 0;
    background-color: #ffdf94;
}

.block.green { grid-column: 14 / 17; grid-row: 5 / 17; background-color: #c4efcb; }
.block.blue { grid-column: 17 / 20; grid-row: 5 / 17; background-color: #b3d3f0; }

.cell {
    border-right: 1px solid #8c8c8c;
    border-bottom: 1px solid #8c8c8c;
    text-align: center;
}

.cell.wide {
    grid-column: span 3;
}

.label {
    font-size: 7.5px;
    line-height: 17px;
}

.value {
    font-size: 10px;
    font-weight: bold;
    line-height: 17px;
}

.note {
    font-size: 5.5px;
    line-height: 17px;
    color: #555;
}

.analysis-title {
    grid-column: 14 / 20;
    grid-row: 30;
    padding-right: 2px;
    font-family: "DejaVu Sans", sans-serif;
    font-size: 10.3px;
    line-height: 19px;
    color: #1f3f77;
}

.analysis-box {
    grid-column: 14 / 20;
    grid-row: 31;
    background-color: #f2f5fc;
    border: 1px solid #c5cee5;
    border-bottom: 0;
}

.row-heads {
    grid-column: 20;
    grid-row: 2 / -1;
    display: grid;
    grid-template-rows: var(--rows);
    background-color: #e6e6e6;
    border-left: 1px solid #a8a8a8;
    font-family: Roboto, sans-serif;
    font-size: 12px;
    line-height: 12px;
    text-align: center;
    color: #333;
}

.row-heads div {
    border-bottom: 1px solid #c4c4c4;
    display: flex;
    align-items: center;
    justify-content: center;
}

.row-heads .current {
    background-color: #d0d0d0;
    color: #3c6e50;
}

/* chart sits on top of the cells */
.chart {
    position: absolute;
    left: 612px;
    top: 287px;
    font-family: "DejaVu Sans", sans-serif;
}

.chart-grid path {
    fill: none;
    stroke: #d8d8d8;
    stroke-width: 1;
}

.line-red,
.line-blue {
    fill: none;
    stroke-width: 2;
}

.line-red { stroke: #ee6a55; }
.line-blue { stroke: #2f8be6; }

.dots-red circle,
.legend-red { fill: #c96a6a; }
.dots-blue circle,
.legend-blue { fill: #4a80c0; }

.y-labels text,
.x-labels text {
    font-size: 6px;
    fill: #707070;
}

.x-labels text {
    text-anchor: end;
}

.chart-title {
    font-size: 8.4px;
    fill: #555;
    text-anchor: middle;
}

.axis-title {
    font-size: 5.500px;
    fill: #707070;
    text-anchor: middle;
}

.legend-text {
    font-size: 5.500px;
    fill: #707070;
    text-anchor: middle;
}

/* sheet tabs */
.sheet-tabs {
    height: 29px;
    padding-left: 20px;
    background-color: #e6e6e6;
    display: flex;
    align-items: center;
    position: relative;
    border-bottom: 1px solid #d0d0d0;
}

.h-scroll {
    width: 508px;
    height: 15px;
    display: flex;
    flex: none;
}

.h-btn {
    width: 15px;
    background-color: #fff;
    border: 1px solid #c6c6c6;
    display: flex;
    align-items: center;
    justify-content: center;
    flex: none;
}

.h-track {
    flex: 1;
    background-color: #d6d6d6;
}

.h-thumb {
    width: 17px;
    background-color: #fff;
    border: 1px solid #c6c6c6;
    flex: none;
}

.tri-left {
    border-top: 4px solid transparent;
    border-bottom: 4px solid transparent;
    border-right: 4px solid #666;
    flex: none;
}

.tri-right {
    border-top: 4px solid transparent;
    border-bottom: 4px solid transparent;
    border-left: 4px solid #666;
    flex: none;
}

.tri-left.pale { border-right-color: #c8c8c8; margin-left: 41px; }
.tri-right.pale { border-left-color: #c8c8c8; margin-left: 25px; }

.tabs-grip {
    margin-top: 0;
}

.add-sheet {
    margin-left: 540px;
}

.sheet-tab {
    padding: 0 15px;
    height: 29px;
    display: flex;
    align-items: center;
    font-size: 12.5px;
    color: #444;
}

.sheet-tab.active {
    width: 64px;
    margin-left: 35px;
    padding: 0;
    justify-content: center;
    background: linear-gradient(to bottom, #fdfdfd, #dbe8f4);
    border-bottom: 2px solid #217346;
    font-size: 12px;
    font-weight: bold;
    color: #217346;
}

.tab-sep {
    width: 1px;
    height: 20px;
    background-color: #a0a0a0;
    flex: none;
}

/* status bar */
.status-bar {
    height: 19px;
    padding-left: 7px;
    background-color: #f1f1f1;
    display: flex;
    align-items: center;
}

.ready {
    width: 1067px;
    color: #555;
}

.view-btn {
    width: 38px;
    height: 19px;
    display: flex;
    align-items: center;
    justify-content: center;
    flex: none;
}

.zoom-minus,
.zoom-plus {
    width: 7px;
    height: 2px;
    background-color: #666;
    flex: none;
    position: relative;
}

.zoom-minus { margin-left: 2px; }

.zoom-plus::after {
    content: "";
    position: absolute;
    left: 2.500px;
    top: -2.500px;
    width: 2px;
    height: 7px;
    background-color: #666;
}

.zoom-track {
    width: 100px;
    height: 1px;
    margin: 0 4px;
    background-color: #a8a8a8;
    position: relative;
    flex: none;
}

.zoom-thumb {
    position: absolute;
    left: 24px;
    top: -5px;
    width: 4px;
    height: 11px;
    background-color: #666;
}

.zoom-mid {
    position: absolute;
    left: 50px;
    top: -2px;
    width: 1px;
    height: 5px;
    background-color: #a8a8a8;
}

.zoom-value {
    margin-left: 18px;
    color: #555;
}

.taskbar-edge {
    height: 3px;
    background-color: #000;
}
```
